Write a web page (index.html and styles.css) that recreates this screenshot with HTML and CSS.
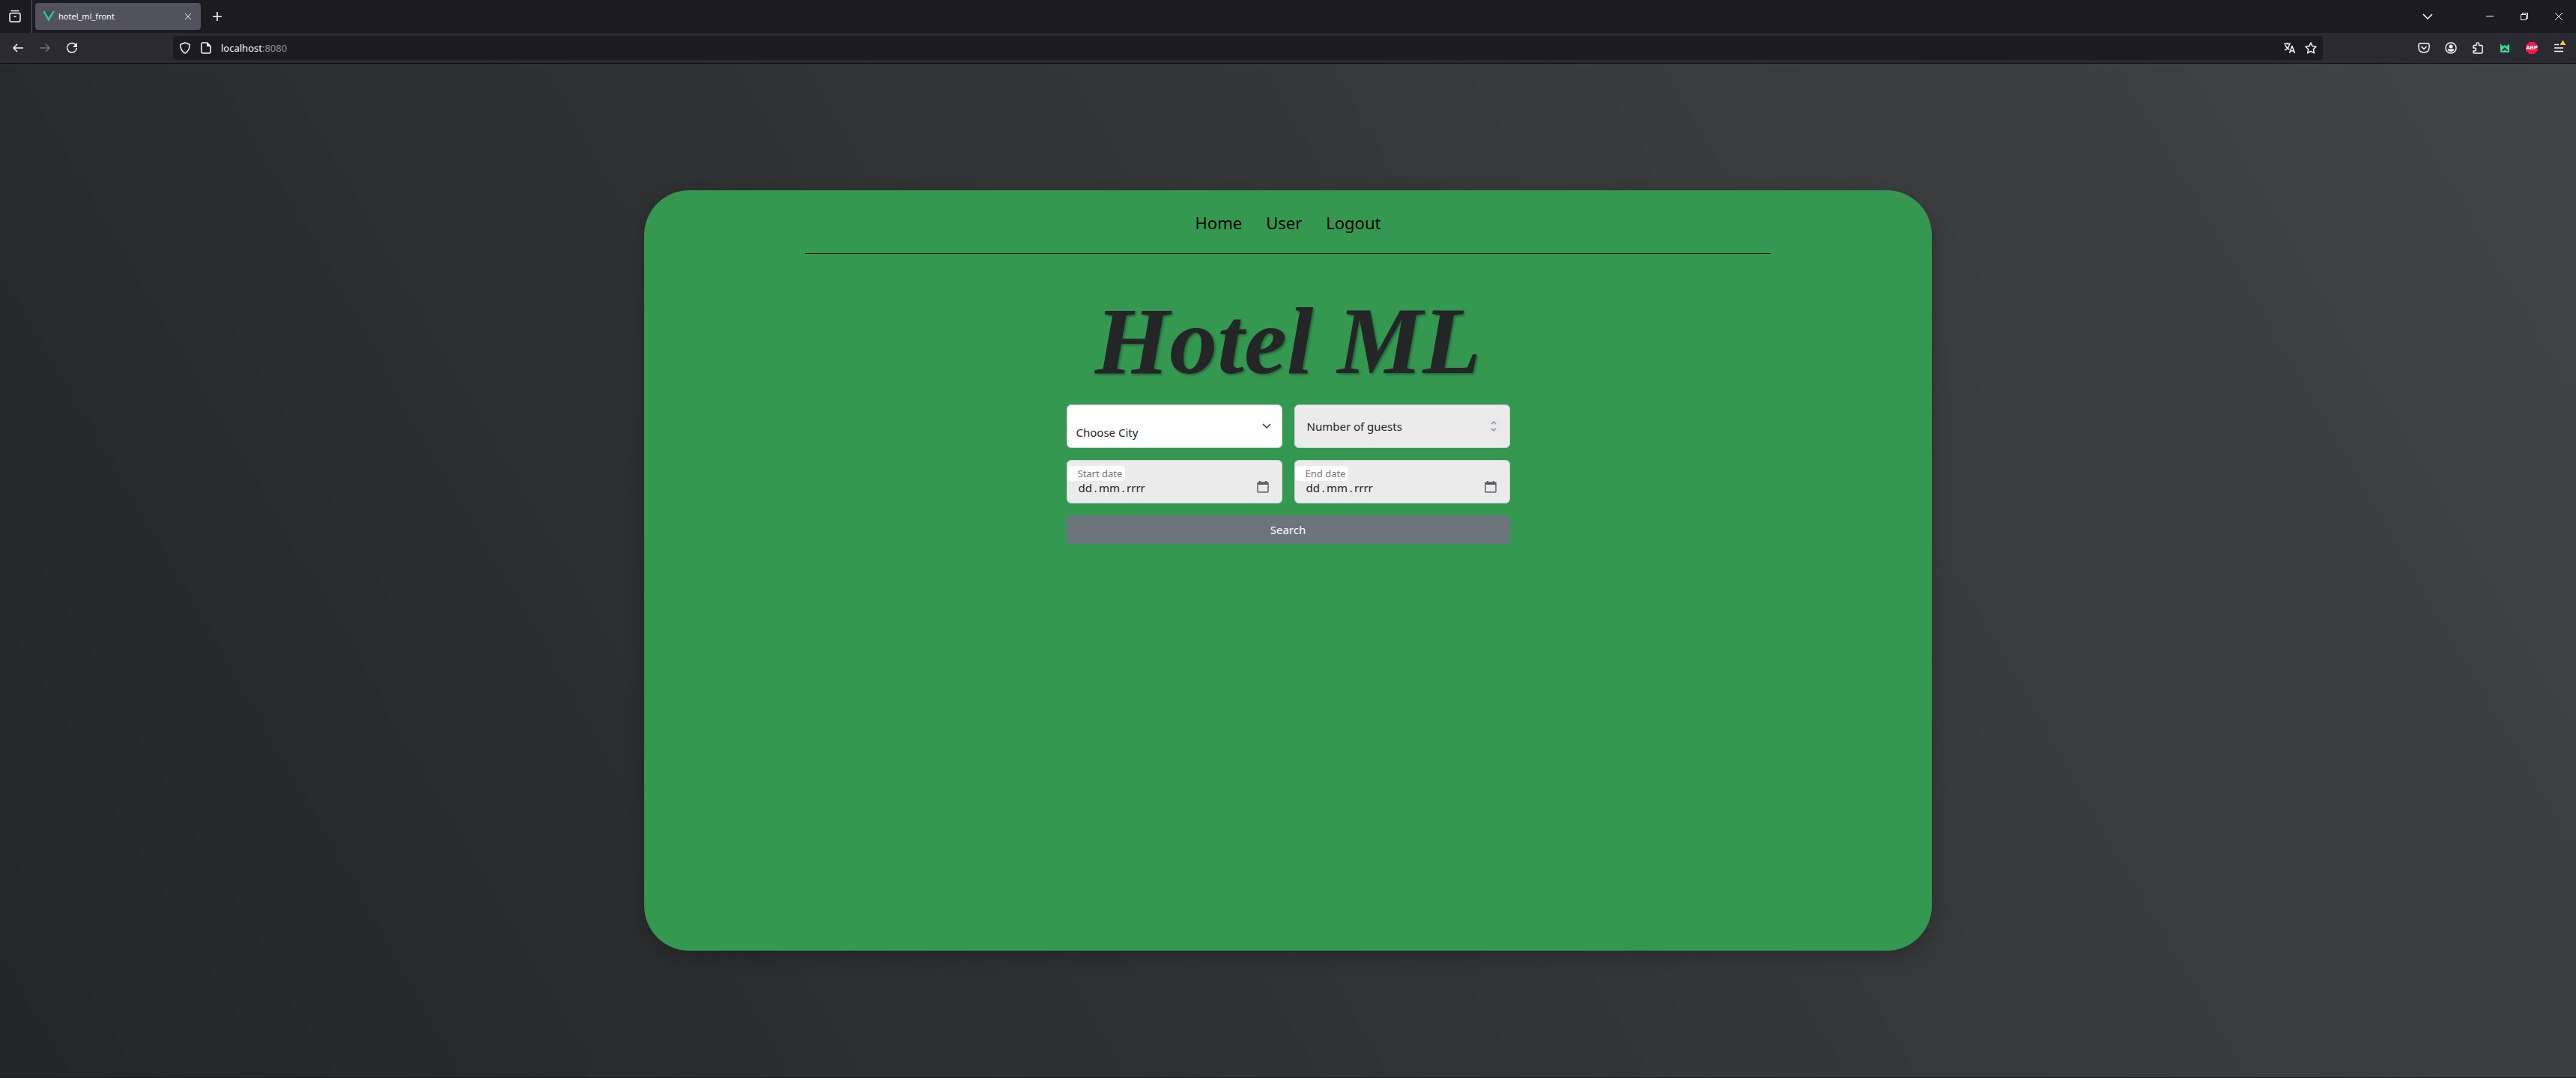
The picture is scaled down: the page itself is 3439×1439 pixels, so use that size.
FILE: index.html
```html
<!DOCTYPE html>
<html lang="en">
<head>
<meta charset="utf-8">
<title>hotel_ml_front</title>
<link rel="stylesheet" href="styles.css">
</head>
<body>
<header class="browser">
  <div class="tabbar">
    <button class="icon-btn recent" aria-label="Recent browsing">
      <svg width="18" height="18" viewBox="0 0 18 18"><path d="M3.500 1.500h11M2 6.500q0-2 2-2h10q2 0 2 2v7.500q0 2-2 2H4q-2 0-2-2zM7.500 9h3"/></svg>
    </button>
    <div class="tab">
      <svg class="vue" width="16" height="14" viewBox="0 0 16 14"><path class="vue-outer" d="M0 0h3.200L8 8.300 12.800 0H16L8 14z"/><path class="vue-inner" d="M3.200 0H6l2 3.500L10 0h2.800L8 8.300z"/></svg>
      <span class="tab-title">hotel_ml_front</span>
      <button class="icon-btn tab-close" aria-label="Close tab">
        <svg width="10" height="10" viewBox="0 0 10 10"><path d="M1 1l8 8M9 1L1 9"/></svg>
      </button>
    </div>
    <button class="icon-btn new-tab" aria-label="New tab">
      <svg width="14" height="14" viewBox="0 0 14 14"><path d="M7 1v12M1 7h12"/></svg>
    </button>
    <div class="window-controls">
      <button class="icon-btn list-tabs" aria-label="List all tabs">
        <svg width="14" height="8" viewBox="0 0 14 8"><path d="M1 1l6 6 6-6"/></svg>
      </button>
      <button class="icon-btn control" aria-label="Minimize">
        <svg width="10" height="10" viewBox="0 0 10 10"><path class="hair" d="M0 4.500h10"/></svg>
      </button>
      <button class="icon-btn control" aria-label="Restore">
        <svg width="10" height="10" viewBox="0 0 10 10"><path class="hair" d="M.5 2.500h7v7h-7zM2.500 2.500v-2h7v7h-2"/></svg>
      </button>
      <button class="icon-btn control" aria-label="Close">
        <svg width="10" height="10" viewBox="0 0 10 10"><path class="hair" d="M0 0l10 10M10 0L0 10"/></svg>
      </button>
    </div>
  </div>
  <div class="toolbar">
    <div class="nav-buttons">
      <button class="icon-btn" aria-label="Back">
        <svg width="16" height="16" viewBox="0 0 16 16"><path d="M15 8H2M7 3L2 8l5 5"/></svg>
      </button>
      <button class="icon-btn dim" aria-label="Forward">
        <svg width="16" height="16" viewBox="0 0 16 16"><path d="M1 8h13M9 3l5 5-5 5"/></svg>
      </button>
      <button class="icon-btn" aria-label="Reload">
        <svg width="16" height="16" viewBox="0 0 16 16"><path d="M13.200 4.200A6.300 6.300 0 1 0 14.300 8"/><path class="solid" d="M15 1v6H9z"/></svg>
      </button>
    </div>
    <div class="urlbar">
      <svg width="16" height="16" viewBox="0 0 16 16"><path d="M8 1l6 2.200q.6 8.300-6 12-6.600-3.700-6-12z"/></svg>
      <svg width="16" height="16" viewBox="0 0 16 16"><path d="M4 1h5.500L14 5.500V13q0 2-2 2H4q-2 0-2-2V3q0-2 2-2z"/><path class="solid" d="M9 1v5h5z"/></svg>
      <span class="address">localhost<span class="port">:8080</span></span>
      <button class="icon-btn url-action" aria-label="Translate">
        <svg width="16" height="16" viewBox="0 0 16 16"><path d="M0 2.500h9M4.500 1v1.500M1.500 11Q7 8 7.500 2.500M2 4q2 5 5.500 6M7.500 15l3.500-9.500L14.500 15M9 12h4.500"/></svg>
      </button>
      <button class="icon-btn url-action" aria-label="Bookmark this page">
        <svg width="16" height="16" viewBox="0 0 16 16"><path d="M8 1l2.100 4.600 4.900.6-3.600 3.500.9 5.200L8 12.400l-4.300 2.500.9-5.200L1 6.200l4.900-.6z"/></svg>
      </button>
    </div>
    <div class="extensions">
      <button class="icon-btn" aria-label="Pocket">
        <svg width="16" height="16" viewBox="0 0 16 16"><path d="M3 2h10q2 0 2 2v3q0 7-7 7T1 7V4q0-2 2-2zM4.500 6L8 9.500 11.500 6"/></svg>
      </button>
      <button class="icon-btn" aria-label="Account">
        <svg width="16" height="16" viewBox="0 0 16 16"><circle cx="8" cy="8" r="7"/><circle class="solid" cx="8" cy="6" r="2.500"/><path class="solid" d="M3.500 9.500h9q-1 3.500-4.500 3.500t-4.500-3.500z"/></svg>
      </button>
      <button class="icon-btn" aria-label="Extensions">
        <svg width="16" height="16" viewBox="0 0 16 16"><path d="M2 7V5.500q0-1 1-1h3V3q0-2 1.700-2t1.700 2v1.500H13q1 0 1 1V14q0 1-1 1H3q-1 0-1-1v-2h1.500q2 0 2-2t-2-2H2z"/></svg>
      </button>
      <button class="icon-btn" aria-label="Castle extension">
        <svg width="14" height="14" viewBox="0 0 14 14"><path class="castle" fill-rule="evenodd" d="M1 1l3.500 4L7 3l2.500 2L13 1v12H1zM3 10v1h2l2-2 2 2h2v-1L7 6z"/></svg>
      </button>
      <button class="icon-btn" aria-label="Adblock Plus">
        <span class="abp">ABP</span>
      </button>
      <button class="icon-btn" aria-label="Application menu">
        <svg class="burger" width="12" height="18" viewBox="0 0 12 18"><path d="M0 4.500h6M0 9h12M0 13.500h12"/><path class="alert" d="M11.500-1.500l4 6.500h-8z"/></svg>
      </button>
    </div>
  </div>
</header>

<main class="page">
  <section class="card">
    <nav class="menu">
      <a href="#">Home</a>
      <a href="#">User</a>
      <a href="#">Logout</a>
    </nav>
    <h1 class="title">Hotel ML</h1>
    <form class="search">
      <div class="field">
        <select class="control-box city" aria-label="City">
          <option>Choose City</option>
        </select>
        <svg class="chevron" width="12" height="8" viewBox="0 0 12 8"><path d="M1 1l5 5 5-5"/></svg>
      </div>
      <div class="field">
        <input class="control-box guests" id="guests" type="number" min="1">
        <label class="guests-label" for="guests">Number of guests</label>
        <span class="spinner"><svg width="8" height="14" viewBox="0 0 8 14"><path d="M1 4l3-3 3 3M1 10l3 3 3-3"/></svg></span>
      </div>
      <div class="field">
        <input class="control-box date" id="start" type="text" value="dd&thinsp;.&thinsp;mm&thinsp;.&thinsp;rrrr">
        <label class="date-label" for="start">Start date</label>
        <svg class="calendar" width="16" height="16" viewBox="0 0 16 16"><path d="M1 3q0-1 1-1h12q1 0 1 1v11q0 1-1 1H2q-1 0-1-1z"/><path class="fill" d="M1 2h14v3H1zM3 0h2v3H3zM11 0h2v3h-2z"/></svg>
      </div>
      <div class="field">
        <input class="control-box date" id="end" type="text" value="dd&thinsp;.&thinsp;mm&thinsp;.&thinsp;rrrr">
        <label class="date-label" for="end">End date</label>
        <svg class="calendar" width="16" height="16" viewBox="0 0 16 16"><path d="M1 3q0-1 1-1h12q1 0 1 1v11q0 1-1 1H2q-1 0-1-1z"/><path class="fill" d="M1 2h14v3H1zM3 0h2v3H3zM11 0h2v3h-2z"/></svg>
      </div>
      <button class="submit" type="submit">Search</button>
    </form>
  </section>
</main>
</body>
</html>
```
FILE: styles.css
```css
* { box-sizing: border-box; }

body {
  margin: 0;
  min-height: 100vh;
  display: flex;
  flex-direction: column;
  font-family: "Noto Sans", sans-serif;
  font-size: 15px;
  line-height: 24px;
  color: #212529;
}

button, input, select { font: inherit; }

/* Browser chrome */
.browser {
  background: #2b2a33;
  color: #fbfbfe;
  border-bottom: 1px solid #0c0c0d;
}
.browser svg path, .browser svg circle {
  stroke: currentColor;
  stroke-width: 1.5;
  stroke-linejoin: round;
  fill: none;
}
.browser svg .hair { stroke-width: 1; }
.browser svg .solid { fill: currentColor; stroke: none; }
.browser svg .vue-outer { fill: #41b883; stroke: none; }
.browser svg .vue-inner { fill: #35495e; stroke: none; }
.browser svg .castle { fill: #3ddc97; stroke: none; }
.browser svg .alert { fill: #ffbd4f; stroke: none; }
.burger { overflow: visible; }

.icon-btn {
  display: flex;
  align-items: center;
  justify-content: center;
  flex: none;
  width: 36px;
  height: 32px;
  padding: 0;
  border: 0;
  background: none;
  color: inherit;
}
.dim { color: #75747c; }

.tabbar {
  display: flex;
  align-items: center;
  height: 44px;
  background: #1c1b22;
}
.recent {
  width: 43px;
  height: 44px;
  padding-right: 3px;
  border-right: 1px solid #57565f;
}
.tab {
  display: flex;
  align-items: center;
  gap: 5px;
  width: 221px;
  height: 36px;
  margin-left: 4px;
  padding: 0 6px 0 10px;
  border-radius: 4px;
  background: #52525e;
}
.tab-title { flex: 1; font-size: 11px; }
.tab-close { width: 22px; height: 24px; }
.tab-close svg path { stroke-width: 1; }
.new-tab { margin-left: 4px; }
.window-controls { display: flex; margin-left: auto; }
.list-tabs { margin-right: 42px; }
.control { width: 46px; }

.toolbar {
  display: flex;
  align-items: center;
  height: 40px;
  padding: 0 5px 0 6px;
}
.nav-buttons { display: flex; width: 225px; }
.urlbar {
  display: flex;
  flex: 1;
  align-items: center;
  gap: 12px;
  height: 32px;
  padding: 0 2px 0 8px;
  border-radius: 4px;
  background: #1c1b22;
}
.address { flex: 1; font-size: 13px; }
.port { color: #8f8f9d; }
.url-action { width: 28px; }
.url-action + .url-action { margin-left: -12px; }
.extensions { display: flex; margin-left: 117px; }
.abp {
  width: 16px;
  height: 16px;
  background: #ed1e45;
  clip-path: polygon(30% 0, 70% 0, 100% 30%, 100% 70%, 70% 100%, 30% 100%, 0 70%, 0 30%);
  font: bold 8px/16px Roboto, sans-serif;
  text-align: center;
}

/* Page */
.page {
  flex: 1;
  display: grid;
  grid-template: 75% / 50%;
  place-content: center;
  background: linear-gradient(60deg, #232526, #414345);
  border-bottom: 1px solid #1c1b22;
}
.card {
  display: flex;
  flex-direction: column;
  align-items: center;
  border-radius: 60px;
  background: #349851;
  box-shadow: 0 8px 24px rgba(0, 0, 0, .2);
}
.menu {
  display: flex;
  justify-content: center;
  gap: 32px;
  width: 75%;
  padding: 27px 0 25px;
  border-bottom: 1px solid #101411;
  font-size: 22px;
  line-height: 32px;
}
.menu a { color: #000; text-decoration: none; }
.title {
  margin: 39px 0 8px;
  font: italic bold 128px/154px "Liberation Serif", serif;
  color: #232526;
  text-shadow: 2px 2px 3px rgba(0, 0, 0, .3);
}
.search {
  display: grid;
  grid-template-columns: 288px 288px;
  gap: 16px;
}
.field { position: relative; height: 58px; }
.control-box {
  width: 100%;
  height: 100%;
  padding: 0 12px;
  border: 1px solid #ced4da;
  border-radius: 6px;
  background: #ebebeb;
  color: #212529;
}
.city {
  appearance: none;
  padding-top: 16px;
  background: #fff;
}
.guests { appearance: textfield; }
.date { padding: 18px 15px 2px; }
.guests-label {
  position: absolute;
  top: 17px;
  left: 17px;
}
.date-label {
  position: absolute;
  top: 8px;
  left: 1px;
  padding: 0 4px 0 14px;
  border-radius: 5px;
  background: #fff;
  color: #6c757d;
  font-size: 13px;
  line-height: 20px;
}
.chevron, .calendar, .spinner { position: absolute; pointer-events: none; }
.chevron {
  top: 25px;
  right: 15px;
  fill: none;
  stroke: #343a40;
  stroke-width: 1.5;
}
.calendar {
  top: 28px;
  right: 18px;
  fill: none;
  stroke: #5f6063;
  stroke-width: 1.5;
}
.calendar .fill { fill: #5f6063; stroke: none; }
.spinner {
  top: 20px;
  right: 13px;
  display: grid;
  place-items: center;
  width: 18px;
  height: 18px;
  background: #e9e9ed;
  fill: none;
  stroke: #8f8f9d;
  stroke-width: 1.5;
}
.submit {
  grid-column: 1 / -1;
  height: 38px;
  border: 0;
  border-radius: 6px;
  background: #6c757d;
  color: #fff;
}
```
